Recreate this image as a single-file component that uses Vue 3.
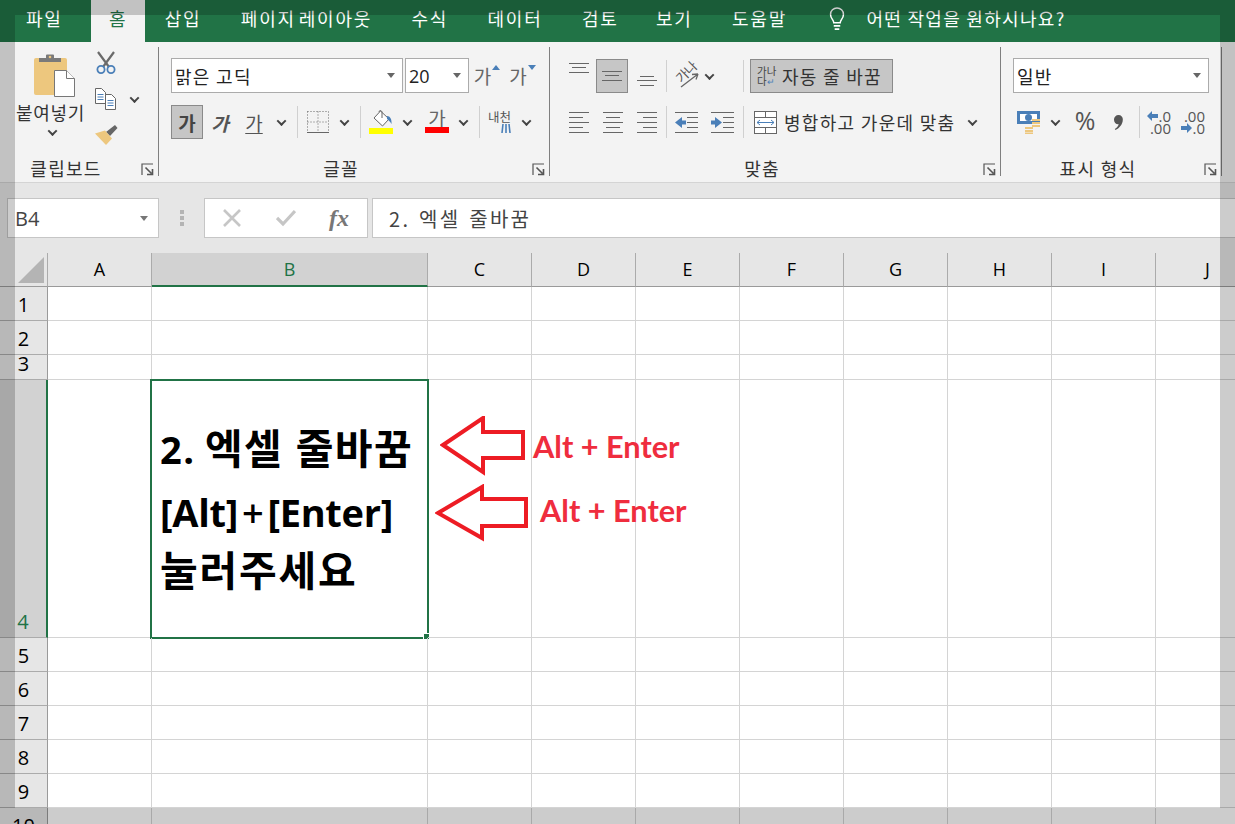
<script setup>
const tabs = ['파일', '홈', '삽입', '페이지 레이아웃', '수식', '데이터', '검토', '보기', '도움말']
const columns = ['A', 'B', 'C', 'D', 'E', 'F', 'G', 'H', 'I', 'J']
const rows = [
  { n: 1, h: 34 }, { n: 2, h: 34 }, { n: 3, h: 25 }, { n: 4, h: 258 }, { n: 5, h: 34 },
  { n: 6, h: 34 }, { n: 7, h: 34 }, { n: 8, h: 34 }, { n: 9, h: 34 }, { n: 10, h: 34 }
]
</script>

<template>
  <div class="app">
    <nav class="tabs">
      <span v-for="t in tabs" :key="t" class="tab" :class="{ active: t === '홈' }">{{ t }}</span>
      <svg class="bulb" width="18" height="24" viewBox="2 0 16 26" fill="none" stroke="#fff" stroke-width="1.6">
        <path d="M6.5 17c0-3-3.5-4.500-3.500-9a7 7 0 0 1 14 0c0 4.500-3.500 6-3.500 9z" />
        <path d="M6.500 20.500h7M7.500 24h5" stroke-width="2" />
      </svg>
      <span class="tell">어떤 작업을 원하시나요?</span>
    </nav>

    <section class="ribbon">
      <!-- Clipboard -->
      <div class="group g1">
        <div class="g1-body">
          <div class="paste">
            <svg width="44" height="46" viewBox="0 0 44 46">
              <rect x="0" y="6" width="33" height="37" rx="2" fill="#edc77e" />
              <path d="M5 10V6h7V3.500a1 1 0 0 1 1-1h6a1 1 0 0 1 1 1V6h7v4z" fill="#7a7a7a" />
              <circle cx="16" cy="5" r="1.300" fill="#edc77e" />
              <path d="M20.500 18.500h12l8 8v18h-20z" fill="#fff" stroke="#777" stroke-width="1" />
              <path d="M32.500 18.500v8h8" fill="#fff" stroke="#777" stroke-width="1" />
            </svg>
            <span class="paste-text">붙여넣기</span>
            <i class="chev" />
          </div>
          <div class="clip-tools">
            <svg width="24" height="24" viewBox="0 0 24 24" fill="none">
              <path d="M4 1l11 15M20 1L9 16" stroke="#6a6a6a" stroke-width="2.200" />
              <circle cx="7" cy="18.500" r="3.600" stroke="#4a7fb8" stroke-width="1.800" />
              <circle cx="17" cy="18.500" r="3.600" stroke="#4a7fb8" stroke-width="1.800" />
            </svg>
            <div class="copy-row">
              <svg width="24" height="24" viewBox="0 0 24 24" fill="#fff" stroke="#666">
                <path d="M1.500 1.500h6l4 4v11h-10z" />
                <path d="M3.500 7.500h6M3.500 10h6M3.500 12.500h6" stroke="#4a7fb8" />
                <path d="M11.500 7.500h6l4 4v11h-10z" />
                <path d="M13.500 13.500h6M13.500 16h6M13.500 18.500h6" stroke="#4a7fb8" />
              </svg>
              <i class="chev copy-chev" />
            </div>
            <svg width="26" height="24" viewBox="0 0 26 24">
              <path d="M12 9l9-7 2.500 3-7.500 8z" fill="#666" />
              <path d="M1 10.500l10-3 7 8-6 6.500z" fill="#edc77e" />
            </svg>
          </div>
        </div>
        <div class="g-label">클립보드</div>
        <svg class="launch" width="13" height="13" viewBox="0 0 13 13" fill="none" stroke="#555">
          <path d="M1 12V1h11" stroke-width="1.200" />
          <path d="M4.500 4.500l6 6M11.500 6v5.500H6" stroke-width="1.600" />
        </svg>
      </div>

      <!-- Font -->
      <div class="group g2">
        <div class="row r1">
          <div class="combo font-name"><span>맑은 고딕</span><i class="drop" /></div>
          <div class="combo font-size"><span class="num">20</span><i class="drop" /></div>
          <span class="ic w36 grow-font">가<svg width="8" height="5" viewBox="0 0 8 5"><path d="M0 5l4-5 4 5z" fill="#4a7fb8" /></svg></span>
          <span class="ic w35 grow-font">가<svg width="8" height="5" viewBox="0 0 8 5"><path d="M0 0l4 5 4-5z" fill="#4a7fb8" /></svg></span>
        </div>
        <div class="row r2">
          <span class="btn-on w32 strong">가</span>
          <span class="ic w34 ital">가</span>
          <span class="ic w34 under">가</span>
          <span class="ic w20"><i class="chev" /></span>
          <i class="sep ml6" />
          <span class="ic w27 ml6">
            <svg width="22" height="22" viewBox="0 0 22 22" fill="none" stroke="#666" stroke-dasharray="1 2">
              <path d="M.5.500h21M.5 11h21M.5.500v21M11 .500v21M21.500.500v21" />
              <path d="M0 21.500h22" stroke-dasharray="none" />
            </svg>
          </span>
          <span class="ic w26"><i class="chev" /></span>
          <i class="sep ml3" />
          <span class="ic w40">
            <svg width="26" height="24" viewBox="0 0 26 24">
              <path d="M12.500 1l8.500 8-6.500 7-8.500-8z" fill="#fff" stroke="#666" />
              <path d="M11 2c0-2 3-2 3 .500V8" fill="none" stroke="#666" />
              <path d="M19 6c3 0 5 3 4.500 8-1-2-3-4-4.500-5z" fill="#4a7fb8" />
              <rect x="1" y="18" width="24" height="6" fill="#ffff00" />
            </svg>
          </span>
          <span class="ic w12"><i class="chev" /></span>
          <span class="ic w44 ml2 color-a"><span>가</span><i class="red-bar" /></span>
          <span class="ic w8"><i class="chev" /></span>
          <i class="sep ml12" />
          <span class="ic w39">
            <span class="phon">
              <span class="phon-t">내천</span>
              <svg width="10" height="11" viewBox="0 0 10 11" fill="none" stroke="#4a7fb8" stroke-width="1.600">
                <path d="M1 10l1-9M5 10V1M9 10L8 1" />
              </svg>
            </span>
          </span>
          <span class="ic w14"><i class="chev" /></span>
        </div>
        <div class="g-label">글꼴</div>
        <svg class="launch" width="13" height="13" viewBox="0 0 13 13" fill="none" stroke="#555">
          <path d="M1 12V1h11" stroke-width="1.200" />
          <path d="M4.500 4.500l6 6M11.500 6v5.500H6" stroke-width="1.600" />
        </svg>
      </div>

      <!-- Alignment -->
      <div class="group g3">
        <div class="row r1 r1b">
          <span class="ic w34 top-a">
            <svg width="20" height="10" viewBox="0 0 20 10" stroke="#666"><path d="M0 .500h20M3 4.500h14M0 9.500h20" /></svg>
          </span>
          <span class="btn-on w32 mr2">
            <svg width="20" height="10" viewBox="0 0 20 10" stroke="#666"><path d="M0 .500h20M3 4.500h14M0 9.500h20" /></svg>
          </span>
          <span class="ic w34 bot-a">
            <svg width="20" height="10" viewBox="0 0 20 10" stroke="#666"><path d="M3 .500h14M0 4.500h20M3 9.500h14" /></svg>
          </span>
          <i class="sep ml2" />
          <span class="ic w39">
            <span class="orient">
              <span class="orient-t">가나</span>
              <svg width="24" height="24" viewBox="0 0 24 24" fill="none" stroke="#666" stroke-width="1.300"><path d="M6 23L23 10M23 10l-6 .500M23 10l-2 5.500" /></svg>
            </span>
          </span>
          <span class="ic w6"><i class="chev" /></span>
          <i class="sep ml31" />
          <span class="btn-on wrap-btn">
            <span class="wrap-ic"><span>가나</span><span>다<em>↵</em></span></span>
            <span class="wrap-t">자동 줄 바꿈</span>
          </span>
        </div>
        <div class="row r2">
          <span class="ic w34">
            <svg width="20" height="21" viewBox="0 0 20 21" stroke="#666"><path d="M0 .500h20M0 5.500h14M0 10.500h20M0 15.500h14M0 20.500h20" /></svg>
          </span>
          <span class="ic w34">
            <svg width="20" height="21" viewBox="0 0 20 21" stroke="#666"><path d="M0 .500h20M3 5.500h14M0 10.500h20M3 15.500h14M0 20.500h20" /></svg>
          </span>
          <span class="ic w34">
            <svg width="20" height="21" viewBox="0 0 20 21" stroke="#666"><path d="M0 .500h20M6 5.500h14M0 10.500h20M6 15.500h14M0 20.500h20" /></svg>
          </span>
          <i class="sep ml2" />
          <span class="ic w39">
            <svg width="23" height="21" viewBox="0 0 23 21"><path d="M0 .500h23M12 5.500h11M12 10.500h11M12 15.500h11M0 20.500h23" stroke="#666" fill="none" /><path d="M0 10.500L7 5v3.500h4v4H7V16z" fill="#4a7fb8" /></svg>
          </span>
          <span class="ic w33">
            <svg width="23" height="21" viewBox="0 0 23 21"><path d="M0 .500h23M12 5.500h11M12 10.500h11M12 15.500h11M0 20.500h23" stroke="#666" fill="none" /><path d="M11 10.500L4 5v3.500H0v4h4V16z" fill="#4a7fb8" /></svg>
          </span>
          <i class="sep ml4" />
          <span class="merge">
            <svg width="23" height="23" viewBox="0 0 23 23" fill="#fff" stroke="#666">
              <rect x=".5" y=".5" width="22" height="22" />
              <path d="M.5 6.500h22M.5 16.500h22M11.500.5v6M11.500 16.500v6" fill="none" />
              <path d="M3 11.500h17" stroke="#4a7fb8" fill="none" />
              <path d="M6 9l-3 2.500L6 14M17 9l3 2.500L17 14" stroke="#4a7fb8" fill="none" />
            </svg>
            <span class="merge-t">병합하고 가운데 맞춤</span>
            <i class="chev merge-chev" />
          </span>
        </div>
        <div class="g-label">맞춤</div>
        <svg class="launch" width="13" height="13" viewBox="0 0 13 13" fill="none" stroke="#555">
          <path d="M1 12V1h11" stroke-width="1.200" />
          <path d="M4.500 4.500l6 6M11.500 6v5.500H6" stroke-width="1.600" />
        </svg>
      </div>

      <!-- Number -->
      <div class="group g4">
        <div class="row r1">
          <div class="combo num-fmt"><span>일반</span><i class="drop" /></div>
        </div>
        <div class="row r2">
          <span class="ic w31">
            <svg width="24" height="23" viewBox="0 0 24 23">
              <rect x="0" y="0" width="23" height="13" fill="#4a7fb8" />
              <rect x="3" y="3" width="17" height="7" fill="#fff" />
              <circle cx="11.500" cy="6.500" r="3.500" fill="#4a7fb8" />
              <path d="M15 9h8M15 12h8M15 15h8" stroke="#edc77e" stroke-width="2.200" />
              <path d="M8 17h8M8 20h8M8 22.500h8" stroke="#edc77e" stroke-width="1.800" />
            </svg>
          </span>
          <span class="ic w22"><i class="chev" /></span>
          <span class="ic w38 pct">%</span>
          <span class="ic w28">
            <svg width="9" height="15" viewBox="0 0 9 15"><path d="M4.500 0a4.300 4.300 0 0 1 4.300 4.800C8.800 9.500 5 13.500 1.500 15l-.7-1C3 12.500 4.300 11 4.700 9.200 2 9.500 0 7.500 0 4.700A4.500 4.500 0 0 1 4.500 0z" fill="#555" /></svg>
          </span>
          <i class="sep ml7" />
          <span class="ic w34 ml3 dec">
            <span class="dec-r"><svg width="11" height="10" viewBox="0 0 11 10"><path d="M0 5l5-5v3h6v4H5v3z" fill="#4a7fb8" /></svg>.0</span>
            <span class="dec-r">.00</span>
          </span>
          <span class="ic w34 dec">
            <span class="dec-r">.00</span>
            <span class="dec-r"><svg width="11" height="10" viewBox="0 0 11 10"><path d="M11 5L6 0v3H0v4h6v3z" fill="#4a7fb8" /></svg>.0</span>
          </span>
        </div>
        <div class="g-label">표시 형식</div>
        <svg class="launch" width="13" height="13" viewBox="0 0 13 13" fill="none" stroke="#555">
          <path d="M1 12V1h11" stroke-width="1.200" />
          <path d="M4.500 4.500l6 6M11.500 6v5.500H6" stroke-width="1.600" />
        </svg>
      </div>
    </section>

    <section class="fbar">
      <div class="namebox"><span>B4</span><i class="drop" /></div>
      <div class="grip"><i /><i /><i /></div>
      <div class="fn-box">
        <svg width="18" height="18" viewBox="0 0 18 18" stroke="#c6c6c6" stroke-width="2.600" fill="none"><path d="M1 1l16 16M17 1L1 17" /></svg>
        <svg width="20" height="18" viewBox="0 0 20 18" stroke="#c6c6c6" stroke-width="3.200" fill="none"><path d="M1 9l6 6L19 2" /></svg>
        <span class="fx">fx</span>
      </div>
      <div class="finput">2. 엑셀 줄바꿈</div>
    </section>

    <section class="sheet">
      <div class="head-row">
        <div class="corner"><svg width="26" height="26" viewBox="0 0 26 26"><path d="M26 0v26H0z" fill="#b4b4b4" /></svg></div>
        <div v-for="c in columns" :key="c" class="col-h" :class="{ wide: c === 'B', sel: c === 'B' }">{{ c }}</div>
      </div>
      <div v-for="r in rows" :key="r.n" class="s-row" :style="{ height: r.h + 'px' }">
        <div class="row-h" :class="{ sel: r.n === 4 }">{{ r.n }}</div>
        <div v-for="c in columns" :key="c" class="cell" :class="{ wide: c === 'B' }">
          <div v-if="r.n === 4 && c === 'B'" class="cell-text">
            <div class="l1"><span class="l1-n">2.</span> 엑셀 줄바꿈</div>
            <div class="l2">[Alt]<span class="plus">+</span>[Enter]</div>
            <div class="l3">눌러주세요</div>
            <div class="selection"><i class="handle" /></div>
          </div>
        </div>
      </div>

      <svg class="arrow a1" width="90" height="62" viewBox="0 0 90 62" fill="#fff" stroke="#ed1c24" stroke-width="4">
        <path d="M3 29L43 2v14h40v26H43v14z" />
      </svg>
      <svg class="arrow a2" width="96" height="60" viewBox="0 0 96 60" fill="#fff" stroke="#ed1c24" stroke-width="4">
        <path d="M3 29L47 3v12h44v27H47v12z" />
      </svg>
      <span class="note n1">Alt + Enter</span>
      <span class="note n2">Alt + Enter</span>
    </section>

    <div class="frame" />
  </div>
</template>

<style>
html, body { margin: 0; background: #fff; overflow: hidden; }
</style>

<style scoped>
.app {
  position: relative;
  width: 1235px;
  height: 824px;
  overflow: hidden;
  font-family: "Noto Sans CJK KR", "Open Sans", sans-serif;
  color: #222;
  background: #fff;
}
.frame {
  position: absolute;
  inset: 0;
  box-sizing: border-box;
  border: solid rgba(0, 0, 0, .2);
  border-width: 15px 15px 16px 15px;
  pointer-events: none;
}

/* tabs */
.tabs {
  height: 42px;
  background: #217346;
  display: flex;
  align-items: center;
  color: #fff;
}
.tab {
  padding: 0 20px;
  height: 42px;
  line-height: 37px;
  font-size: 18px;
  letter-spacing: 1.800px;
  word-spacing: -3px;
  margin-right: -.7px;
  white-space: nowrap;
}
.tab:first-child { margin-left: 6px; margin-right: 8.300px; }
.tab:nth-child(8) { margin-left: -2px; }
.tab.active {
  background: #f3f3f3;
  color: #217346;
  padding: 0 18px;
}
.bulb { margin-left: 22px; margin-bottom: 4px; flex: none; }
.tell {
  margin-left: 20px;
  font-size: 18px;
  letter-spacing: 1.300px;
  line-height: 37px;
  height: 42px;
  white-space: nowrap;
}

/* ribbon */
.ribbon {
  height: 141px;
  box-sizing: border-box;
  padding-top: 5px;
  background: #f3f3f3;
  border-bottom: 1px solid #d4d4d4;
  display: flex;
  align-items: flex-start;
}
.group {
  position: relative;
  height: 129px;
  box-sizing: border-box;
  border-right: 1px solid #7f7f7f;
  flex: none;
  display: flex;
  flex-direction: column;
}
.g1 { width: 159px; }
.g2 { width: 391px; padding: 11px 0 0 12px; }
.g3 { width: 451px; padding: 11px 0 0 12px; }
.g4 { width: 221px; padding: 11px 0 0 12px; }
.g-label {
  position: absolute;
  left: 0;
  right: 26px;
  bottom: -2px;
  height: 20px;
  line-height: 20px;
  text-align: center;
  font-size: 18px;
  letter-spacing: 1.300px;
  color: #333;
  white-space: nowrap;
}
.launch { position: absolute; right: 4px; bottom: 0; }

.g1-body { display: flex; }
.paste {
  width: 72px;
  margin-left: 16px;
  display: flex;
  flex-direction: column;
  align-items: center;
  padding-top: 5px;
  flex: none;
}
.paste svg { align-self: flex-start; margin-left: 18px; }
.paste-text {
  font-size: 18px;
  letter-spacing: .7px;
  margin: 3px 3px 0 0;
  line-height: 22px;
  white-space: nowrap;
  color: #333;
}
.paste .chev { margin-top: 6px; }
.clip-tools {
  margin-left: 6px;
  padding-top: 4px;
  display: flex;
  flex-direction: column;
  gap: 12px;
}
.copy-row { display: flex; align-items: center; }
.copy-chev { margin-left: 13px; margin-top: 0; }

.row { display: flex; align-items: center; }
.r1 { height: 35px; }
.r1b { height: 35px; padding-top: 1px; box-sizing: border-box; }
.r2 { height: 34px; margin-top: 12px; }
.ic { display: flex; align-items: center; justify-content: center; flex: none; height: 34px; }
.w6 { width: 6px; } .w8 { width: 8px; } .w12 { width: 12px; } .w14 { width: 14px; }
.w20 { width: 20px; } .w22 { width: 22px; } .w26 { width: 26px; } .w27 { width: 27px; }
.w28 { width: 28px; } .w31 { width: 31px; } .w32 { width: 32px; } .w33 { width: 33px; }
.w34 { width: 34px; } .w35 { width: 35px; } .w36 { width: 36px; } .w38 { width: 38px; }
.w39 { width: 39px; } .w40 { width: 40px; } .w44 { width: 44px; }
.ml2 { margin-left: 2px; } .ml3 { margin-left: 3px; } .ml4 { margin-left: 4px; }
.ml6 { margin-left: 6px; } .ml7 { margin-left: 7px; } .ml12 { margin-left: 12px; } .ml31 { margin-left: 31px; }
.mr2 { margin-right: 2px; }

.sep { width: 1px; height: 32px; background: #d0d0d0; flex: none; display: block; }
.chev {
  display: block;
  width: 5px;
  height: 5px;
  box-sizing: content-box;
  border-right: 2px solid #444;
  border-bottom: 2px solid #444;
  transform: rotate(45deg) translate(-1px, -1px);
  flex: none;
}
.drop {
  display: block;
  width: 0;
  height: 0;
  border: 4.500px solid transparent;
  border-top: 5px solid #666;
  border-bottom: 0;
  flex: none;
}
.combo {
  height: 35px;
  box-sizing: border-box;
  background: #fff;
  border: 1px solid #ababab;
  display: flex;
  align-items: center;
  justify-content: space-between;
  padding: 0 7px 0 3px;
  font-size: 18px;
  letter-spacing: 1.300px;
  flex: none;
  color: #222;
}
.font-name { width: 232px; }
.font-size { width: 64px; margin-left: 2px; }
.num-fmt { width: 196px; }
.num { font-family: "Open Sans", sans-serif; font-size: 18px; letter-spacing: 0; }
.grow-font {
  color: #666;
  font-size: 19px;
  align-items: flex-start;
  line-height: 34px;
  gap: 1px;
}
.grow-font svg { margin-top: 6px; }
.btn-on {
  display: flex;
  align-items: center;
  justify-content: center;
  height: 34px;
  box-sizing: border-box;
  background: #c6c6c6;
  border: 1px solid #8a8a8a;
  flex: none;
}
.strong { font-size: 19px; font-weight: 700; color: #444; }
.ital { font-size: 19px; font-style: italic; font-weight: 700; color: #555; }
.under { font-size: 19px; text-decoration: underline; text-underline-offset: 2px; color: #555; }
.color-a {
  position: relative;
  font-size: 19px;
  color: #666;
  line-height: 26px;
  align-items: flex-start;
}
.red-bar {
  position: absolute;
  left: 10px;
  top: 22px;
  width: 24px;
  height: 6px;
  background: #f00;
}
.phon { display: flex; flex-direction: column; align-items: flex-end; }
.phon-t { font-size: 12.500px; line-height: 12px; color: #555; letter-spacing: 0; white-space: nowrap; }

.top-a { align-items: flex-start; padding-top: 4px; box-sizing: border-box; }
.bot-a { align-items: flex-end; padding-bottom: 7px; box-sizing: border-box; }
.orient { position: relative; width: 24px; height: 24px; }
.orient svg { position: absolute; left: 0; top: 0; }
.orient-t {
  position: absolute;
  left: -1px;
  top: 0;
  font-size: 13px;
  line-height: 15px;
  color: #555;
  transform: rotate(-45deg);
  white-space: nowrap;
}
.wrap-btn { width: 143px; margin-left: 6px; justify-content: flex-start; padding-left: 6px; }
.wrap-ic {
  display: flex;
  flex-direction: column;
  font-size: 10.500px;
  line-height: 10px;
  color: #444;
  width: 25px;
  flex: none;
  white-space: nowrap;
}
.wrap-ic em { color: #4a7fb8; font-style: normal; font-size: 9px; }
.wrap-t { font-size: 18px; letter-spacing: 1.300px; color: #333; white-space: nowrap; }
.merge { display: flex; align-items: center; margin-left: 10px; }
.merge-t { font-size: 18px; letter-spacing: 1.300px; margin-left: 7px; color: #333; white-space: nowrap; }
.merge-chev { margin-left: 14px; }
.pct { font-family: "Open Sans", sans-serif; font-size: 25px; color: #555; padding-bottom: 4px; box-sizing: border-box; }
.dec {
  flex-direction: column;
  font-family: "Open Sans", sans-serif;
  font-size: 15px;
  line-height: 12px;
  color: #555;
  align-items: flex-end;
  padding-right: 6px;
  box-sizing: border-box;
}
.dec-r { display: flex; align-items: center; white-space: nowrap; height: 12px; }

/* formula bar */
.fbar {
  height: 70px;
  box-sizing: border-box;
  background: #e6e6e6;
  display: flex;
  padding: 15px 0 0 7px;
  align-items: flex-start;
  color: #444;
}
.namebox, .fn-box, .finput {
  height: 40px;
  box-sizing: border-box;
  background: #fff;
  border: 1px solid #c6c6c6;
  flex: none;
  display: flex;
  align-items: center;
}
.namebox {
  width: 152px;
  padding: 0 10px 0 7px;
  justify-content: space-between;
  font: 20px "Open Sans", sans-serif;
}
.namebox .drop { border-top-color: #777; }
.grip {
  width: 45px;
  flex: none;
  display: flex;
  flex-direction: column;
  align-items: center;
  gap: 2px;
  padding: 12px 0 0 0;
}
.grip i { display: block; width: 4px; height: 4px; background: #b4b4b4; }
.fn-box {
  width: 164px;
  padding-left: 18px;
  gap: 35px;
}
.fx { font: italic 700 24px "Liberation Serif", serif; color: #777; margin-left: -2px; }
.finput {
  flex: 1;
  margin-left: 4px;
  padding-left: 16px;
  font-size: 20px;
  letter-spacing: 2.300px;
  word-spacing: 2px;
  border-right: 0;
}

/* sheet */
.sheet { position: relative; font-family: "Open Sans", sans-serif; }
.head-row { display: flex; height: 34px; }
.corner {
  width: 48px;
  flex: none;
  box-sizing: border-box;
  background: #e6e6e6;
  border-right: 1px solid #ababab;
  border-bottom: 1px solid #9a9a9a;
  padding: 4px 0 0 18px;
  line-height: 0;
}
.col-h {
  width: 104px;
  flex: none;
  box-sizing: border-box;
  background: #e6e6e6;
  border-right: 1px solid #ababab;
  border-bottom: 1px solid #9a9a9a;
  text-align: center;
  font-size: 18px;
  line-height: 33px;
  color: #000;
}
.col-h.wide, .cell.wide { width: 276px; }
.col-h.sel {
  background: #d2d2d2;
  color: #217346;
  border-bottom: 2px solid #217346;
}
.s-row { display: flex; box-sizing: border-box; }
.row-h {
  width: 48px;
  flex: none;
  box-sizing: border-box;
  background: #e6e6e6;
  border-right: 1px solid #9a9a9a;
  border-bottom: 1px solid #ababab;
  display: flex;
  align-items: flex-end;
  justify-content: center;
  font-size: 20px;
  line-height: 30px;
  color: #000;
}
.row-h.sel {
  background: #d2d2d2;
  color: #217346;
  border-right: 2px solid #217346;
}
.cell {
  width: 104px;
  flex: none;
  box-sizing: border-box;
  border-right: 1px solid #d4d4d4;
  border-bottom: 1px solid #d4d4d4;
  position: relative;
}
.cell-text {
  position: absolute;
  inset: 0;
  display: flex;
  flex-direction: column;
  justify-content: center;
  padding: 0 0 3px 8px;
  font-family: "Noto Sans CJK KR", sans-serif;
  font-weight: 700;
  font-size: 41px;
  line-height: 61px;
  color: #000;
  white-space: nowrap;
}
.l1 { letter-spacing: 1.500px; word-spacing: 1.500px; }
.l1-n { font-family: "Open Sans", sans-serif; font-size: 38px; margin-right: -3px; }
.l2 { font-family: "Open Sans", "Noto Sans CJK KR", sans-serif; font-size: 38px; letter-spacing: -.3px; padding-top: 2px; }
.plus { margin: 0 4px; font-weight: 600; font-size: 38px; }
.l3 { letter-spacing: 1.800px; margin-top: -5px; }
.selection {
  position: absolute;
  left: -2px;
  top: -1px;
  right: -2px;
  bottom: -2px;
  border: 2px solid #217346;
  pointer-events: none;
}
.handle {
  position: absolute;
  right: -3px;
  bottom: -3px;
  display: block;
  box-sizing: content-box;
  width: 5px;
  height: 5px;
  background: #217346;
  border: 1px solid #fff;
}
.arrow { position: absolute; }
.a1 { left: 440px; top: 163px; }
.a2 { left: 435px; top: 231px; }
.note {
  position: absolute;
  font-family: Lato, sans-serif;
  font-weight: 700;
  font-size: 30.700px;
  line-height: 36px;
  color: #ef2d3e;
  white-space: nowrap;
}
.n1 { left: 533px; top: 176px; }
.n2 { left: 540px; top: 240px; }
</style>
